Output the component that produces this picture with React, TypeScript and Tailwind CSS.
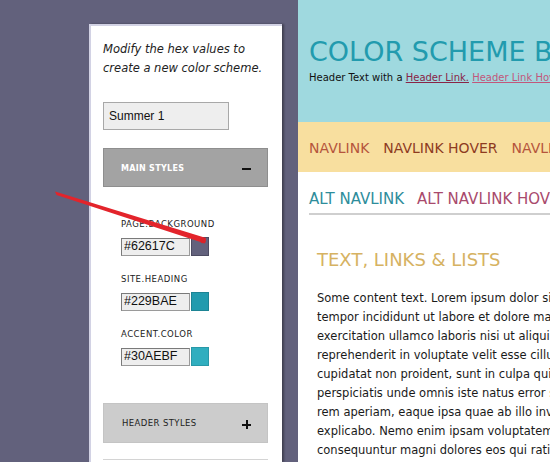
import React from 'react';

const verdana = "font-['DejaVu_Sans',Verdana,sans-serif]";
const arial = "font-['Liberation_Sans',Arial,sans-serif]";

interface ColorFieldProps {
    label: string;
    value: string;
    swatch: string;
    edge: string;
}

const ColorField: React.FC<ColorFieldProps> = ({ label, value, swatch, edge }) => (
    <div className="mt-[17px] first:mt-[31px] pl-[18px]">
        <div className={`${verdana} text-[8.5px] leading-[12px] tracking-[0.5px] text-[#222]`}>{label}</div>
        <div className="mt-[7px] flex items-center">
            <input
                readOnly
                defaultValue={value}
                className={`${arial} w-[69px] h-[18px] px-[2px] text-[12.5px] text-[#111] bg-[#eeeeee] border border-[#9a9a9a] border-t-[#7a7a7a] border-l-[#7a7a7a] outline-none`}
            />
            <div className="ml-[1px] w-[18px] h-[19px] border" style={{ backgroundColor: swatch, borderColor: edge }}></div>
        </div>
    </div>
);

interface SectionBarProps {
    title: string;
    open: boolean;
}

const SectionBar: React.FC<SectionBarProps> = ({ title, open }) => {
    if (open) {
        return (
            <div className="mt-[18px] h-[39px] bg-[#a3a3a3] border border-[#8e8e8e] flex items-center justify-between pl-[17px] pr-[16px] pt-[3px]">
                <span className={`${verdana} text-[8px] font-bold tracking-[0.3px] text-white`}>{title}</span>
                <span className="w-[9px] h-[2px] bg-[#111]"></span>
            </div>
        );
    }
    return (
        <div className="mt-[37px] h-[40px] bg-[#cccccc] border border-[#c4c4c4] flex items-center justify-between pl-[18px] pr-[16px]">
            <span className={`${verdana} text-[8.5px] tracking-[0.4px] text-[#222]`}>{title}</span>
            <span className="relative w-[9px] h-[9px] mt-[3px]">
                <span className="absolute left-0 top-[3.5px] w-[9px] h-[2px] bg-[#111]"></span>
                <span className="absolute top-0 left-[3.5px] w-[2px] h-[9px] bg-[#111]"></span>
            </span>
        </div>
    );
};

const bodyLines = [
    'Some content text. Lorem ipsum dolor sit amet, consectetur adipisicing elit, sed do eiusmod',
    'tempor incididunt ut labore et dolore magna aliqua. Ut enim ad minim veniam, quis nostrud',
    'exercitation ullamco laboris nisi ut aliquip ex ea commodo consequat. Duis aute irure dolor in',
    'reprehenderit in voluptate velit esse cillum dolore eu fugiat nulla pariatur. Excepteur sint',
    'cupidatat non proident, sunt in culpa qui officia deserunt mollit anim id est laborum. Sed ut',
    'perspiciatis unde omnis iste natus error sit voluptatem accusantium doloremque laudantium, totam',
    'rem aperiam, eaque ipsa quae ab illo inventore veritatis et quasi architecto beatae vitae dicta',
    'explicabo. Nemo enim ipsam voluptatem quia voluptas sit aspernatur aut odit aut fugit, sed quia',
    'consequuntur magni dolores eos qui ratione voluptatem sequi nesciunt.',
];

const App: React.FC = () => {
    return (
        <div className="relative w-[550px] h-[462px] overflow-hidden bg-[#62617c] flex">
            {/* editor sidebar */}
            <div className="ml-[89px] mt-[24px] w-[193px] shrink-0 bg-white border-l-2 border-t-2 border-[#d2d2e4] shadow-[2px_0_2px_rgba(0,0,0,0.35)] pl-[12px] pr-[14px] pt-[14px]">
                <p className={`${verdana} italic text-[11.5px] leading-[19px] text-[#222]`}>
                    Modify the hex values to<br />create a new color scheme.
                </p>
                <input
                    readOnly
                    defaultValue="Summer 1"
                    className={`${arial} mt-[24px] w-[126px] h-[28px] px-[5px] text-[12px] text-[#111] bg-[#eeeeee] border border-[#a8a8a8] outline-none`}
                />
                <SectionBar title="MAIN STYLES" open={true} />
                <div>
                    <ColorField label="PAGE.BACKGROUND" value="#62617C" swatch="#62617C" edge="#4c4b62" />
                    <ColorField label="SITE.HEADING" value="#229BAE" swatch="#229BAE" edge="#1d8494" />
                    <ColorField label="ACCENT.COLOR" value="#30AEBF" swatch="#30AEBF" edge="#2898a8" />
                </div>
                <SectionBar title="HEADER STYLES" open={false} />
                <div className="mt-[16px] h-[40px] border-t border-[#d4d4d4]"></div>
            </div>

            {/* preview */}
            <div className="ml-[16px] flex-1 min-w-0 overflow-hidden bg-white">
                <div className="h-[122px] bg-[#9fd9df] pl-[11px] pt-[36px] whitespace-nowrap">
                    <div className={`${verdana} text-[27px] leading-[32px] text-[#229bae]`}>COLOR SCHEME BUILDER</div>
                    <div className={`${verdana} mt-[3px] text-[10px] leading-[14px] text-[#111]`}>
                        Header Text with a <span className="underline text-[#8a2446]">Header Link.</span>{' '}
                        <span className="underline text-[#c2577b]">Header Link Hover</span>
                    </div>
                </div>
                <div className={`${verdana} h-[50px] bg-[#f8df9f] flex items-center gap-[14px] pl-[11px] pt-[3px] text-[14px] whitespace-nowrap`}>
                    <span className="text-[#b5553c]">NAVLINK</span>
                    <span className="text-[#8e3b1f]">NAVLINK HOVER</span>
                    <span className="text-[#b5553c]">NAVLINK</span>
                </div>
                <div className={`${verdana} ml-[11px] pt-[17px] pb-[4px] border-b-2 border-[#cfcfcf] flex gap-[13px] text-[15px] leading-[20px] whitespace-nowrap`}>
                    <span className="text-[#2e8d9b]">ALT NAVLINK</span>
                    <span className="text-[#a94a6c]">ALT NAVLINK HOVER</span>
                </div>
                <div className="pl-[19px] pt-[33px]">
                    <h2 className={`${verdana} text-[18px] leading-[24px] text-[#d6b262] whitespace-nowrap`}>TEXT, LINKS &amp; LISTS</h2>
                    <div className={`${verdana} mt-[17px] text-[11.5px] leading-[19px] text-[#1a1a1a]`}>
                        {bodyLines.map((line) => (
                            <div key={line} className="whitespace-nowrap">{line}</div>
                        ))}
                    </div>
                </div>
            </div>

            {/* red annotation arrow */}
            <svg className="absolute left-0 top-0 pointer-events-none" width="550" height="462" viewBox="0 0 550 462">
                <polygon points="55,191.5 56.5,195 205,243.5 206,238" fill="#e3242b" />
                <circle cx="203" cy="240.5" r="2.8" fill="#d9232a" />
            </svg>
        </div>
    );
};

export default App;
